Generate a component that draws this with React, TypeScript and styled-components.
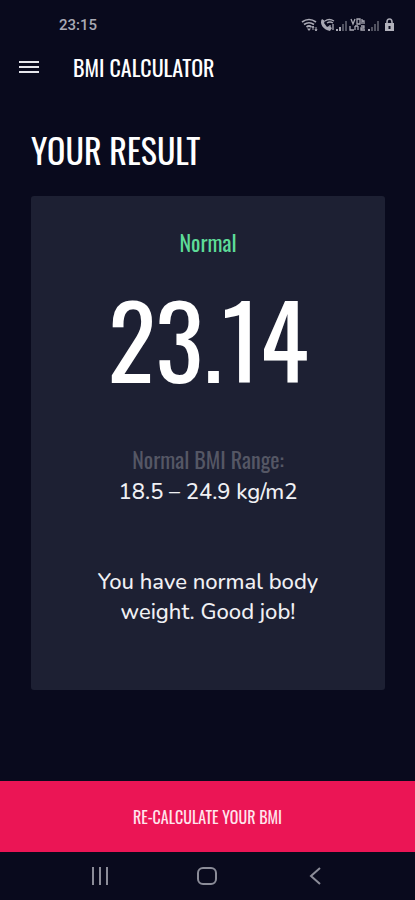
import React from "react";
import styled, { createGlobalStyle } from "styled-components";

const condensed = `Oswald, "Liberation Sans Narrow", "Roboto Condensed", "Liberation Sans", sans-serif`;
const rounded = `Nunito, Lato, "Noto Sans", sans-serif`;

const GlobalStyle = createGlobalStyle`
  * { box-sizing: border-box; }
  body { margin: 0; background: #090a1d; }
  h1, h2, p { margin: 0; font-weight: 400; }
  button { border: 0; padding: 0; cursor: pointer; background: none; color: inherit; }
`;

const Screen = styled.div`
  min-height: 100vh;
  display: flex;
  flex-direction: column;
  background: #090a1d;
  color: #fff;
  font-family: ${condensed};
`;

const StatusBar = styled.div`
  height: 50px;
  padding: 0 18px 0 59px;
  display: flex;
  align-items: center;
  justify-content: space-between;
  color: #a9a9b4;
  font: 500 15px/20px Roboto, sans-serif;
`;

const AppBar = styled.header`
  height: 34px;
  padding: 0 18px;
  display: flex;
  align-items: center;
  gap: 34px;
`;

const MenuButton = styled.button`
  display: flex;
`;

const AppTitle = styled.h1`
  font-size: 22px;
  line-height: 32px;
`;

const Content = styled.main`
  flex: 1;
  display: flex;
  flex-direction: column;
  padding: 42px 30px 91px 31px;
`;

const PageTitle = styled.h2`
  font-size: 34px;
  line-height: 48px;
`;

const ResultCard = styled.section`
  flex: 1;
  margin-top: 22px;
  padding: 30px 24px;
  display: flex;
  flex-direction: column;
  align-items: center;
  border-radius: 3px;
  background: #1d2033;
  text-align: center;
`;

const Category = styled.p`
  color: #5ddb98;
  font-size: 22px;
  line-height: 32px;
`;

const Score = styled.p`
  margin: 20px 0 45px;
  font-size: 100px;
  line-height: 120px;
`;

const Range = styled.div`
  display: grid;
  gap: 2px;
  margin-bottom: 60px;
`;

const RangeLabel = styled.p`
  color: #555765;
  font-size: 22px;
  line-height: 32px;
`;

const BodyText = styled.p`
  && { font-weight: 500; }
  max-width: 240px;
  color: #f0f0f4;
  font-family: ${rounded};
  font-size: 22px;
  line-height: 30px;
`;

const RecalculateButton = styled.button`
  && { background: #eb1555; color: #ffe4ec; }
  height: 71px;
  font-family: ${condensed};
  font-size: 16px;
`;

const SystemNav = styled.nav`
  height: 48px;
  padding: 0 46px;
  display: grid;
  grid-template-columns: repeat(3, 1fr);
  place-items: center;
`;

const NavButton = styled.button`
  && { color: #8b8c98; }
  display: flex;
`;

const StatusIcons = () => (
  <svg width="96" height="16" viewBox="0 0 96 16" fill="none" stroke="#a9a9b4" aria-hidden="true">
    <path d="M1 5Q8 0 15 5M3 7.500Q8 4 13 7.500M5.500 10Q8 8 10.500 10" strokeWidth="1.700" />
    <path d="M6 11.500h4L8 14z" fill="#a9a9b4" stroke="none" />
    <path d="M12 9v4M15 14v-4M11 11l1-2 1 2M14 12l1 2 1-2" />
    <path d="M21 2c-3 4 1 11 8 12l2-3-3-2-2 1-3-4 1-2z" fill="#a9a9b4" stroke="none" />
    <path d="M24 4Q28 1 33 4M26 6Q29 4 32 6M29 8v3M32 7v6" strokeWidth="1.300" />
    <g stroke="none">
      <path d="M35 12h2v2h-2zM38 10h2v4h-2z" fill="#a9a9b4" />
      <path d="M41 7h2v7h-2zM44 4h2v10h-2z" fill="#50515f" />
      <path d="M67 12h2v2h-2z" fill="#a9a9b4" />
      <path d="M70 10h2v4h-2zM73 7h2v7h-2zM76 4h2v10h-2z" fill="#50515f" />
    </g>
    <path d="M50 2l2 5 2-5M56 2h3v5h-3zM61 2v5M61 4h2v3M49 9v4h4M54 9v4M54 9h3M57 13V9M60 9h3v2h-3v2h4" strokeWidth="1.300" />
    <path d="M86 7V5q0-3 2.500-3T91 5v2" strokeWidth="1.600" />
    <path d="M84 6h9v8h-9zM87.500 9v3h2V9z" fill="#b2b2bc" fillRule="evenodd" stroke="none" />
  </svg>
);

export default function App() {
  return (
    <>
      <GlobalStyle />
      <Screen>
        <StatusBar>
          <time>23:15</time>
          <StatusIcons />
        </StatusBar>
        <AppBar>
          <MenuButton type="button" aria-label="Open menu">
            <svg width="21" height="15" viewBox="0 0 21 15" fill="#e6e6ec">
              <path d="M1 1h20v2H1zM1 6h20v2H1zM1 11h20v2H1z" />
            </svg>
          </MenuButton>
          <AppTitle>BMI CALCULATOR</AppTitle>
        </AppBar>
        <Content>
          <PageTitle>YOUR RESULT</PageTitle>
          <ResultCard>
            <Category>Normal</Category>
            <Score>23.14</Score>
            <Range>
              <RangeLabel>Normal BMI Range:</RangeLabel>
              <BodyText>18.5 – 24.9 kg/m2</BodyText>
            </Range>
            <BodyText>You have normal body weight. Good job!</BodyText>
          </ResultCard>
        </Content>
        <RecalculateButton type="button">RE-CALCULATE YOUR BMI</RecalculateButton>
        <SystemNav aria-label="System navigation">
          <NavButton type="button" aria-label="Recent apps">
            <svg width="18" height="18" viewBox="0 0 18 18" stroke="currentColor" strokeWidth="2">
              <path d="M2 0v18M9 0v18M16 0v18" />
            </svg>
          </NavButton>
          <NavButton type="button" aria-label="Home">
            <svg width="20" height="20" viewBox="0 0 20 20" fill="none" stroke="currentColor" strokeWidth="2">
              <rect x="1" y="2" width="18" height="16" rx="5" />
            </svg>
          </NavButton>
          <NavButton type="button" aria-label="Back">
            <svg width="12" height="18" viewBox="0 0 12 18" fill="none" stroke="currentColor" strokeWidth="2">
              <path d="M11 1L2 9l9 8" />
            </svg>
          </NavButton>
        </SystemNav>
      </Screen>
    </>
  );
}
